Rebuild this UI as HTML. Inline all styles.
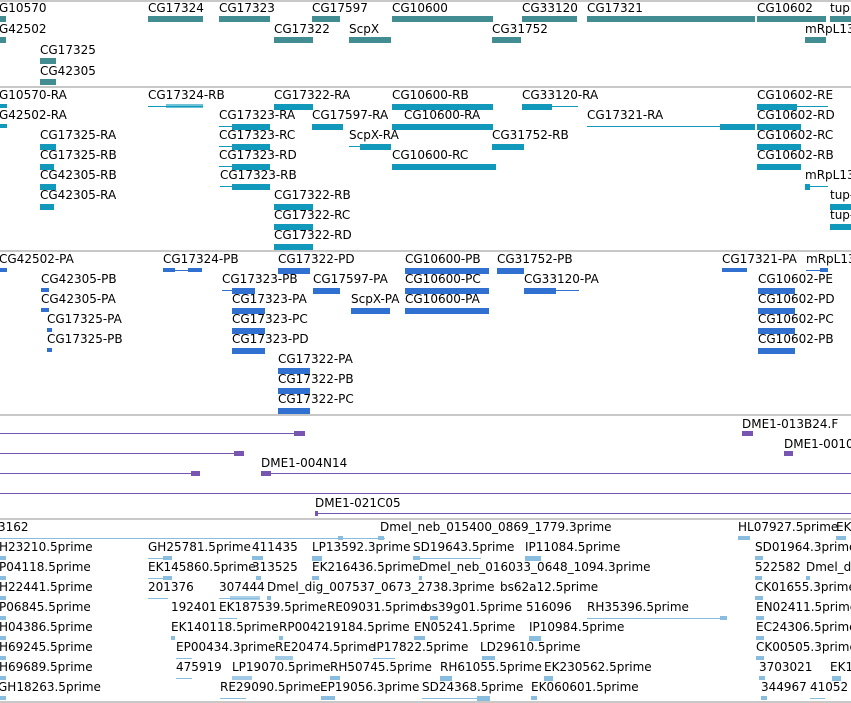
<!DOCTYPE html>
<html><head><meta charset="utf-8"><style>
body{margin:0;width:851px;height:703px;overflow:hidden;background:#fff;position:relative;font-family:"DejaVu Sans","Liberation Sans",sans-serif}
.t{position:absolute;font-size:12px;line-height:14px;white-space:nowrap;color:#000}
.b{position:absolute;height:6px}
.l{position:absolute;height:1px}
.h{position:absolute;left:0;width:851px;height:2px;background:#c8c8c8}
.a{background:#418d92}.c{background:#1199bb}.p{background:#3070d0}.v{background:#7755b0}.s{background:#88bde0}
</style></head><body>
<div class="h" style="top:0"></div>
<div class="h" style="top:86px"></div>
<div class="h" style="top:250px"></div>
<div class="h" style="top:414px"></div>
<div class="h" style="top:518px"></div>
<div class="h" style="top:701px"></div>

<!-- track 1 -->
<div class="t" style="left:-1px;top:1px">G10570</div><div class="b a" style="left:0;top:16px;width:6px"></div>
<div class="t" style="left:148px;top:1px">CG17324</div><div class="b a" style="left:148px;top:16px;width:55px"></div>
<div class="t" style="left:219px;top:1px">CG17323</div><div class="b a" style="left:219px;top:16px;width:51px"></div>
<div class="t" style="left:312px;top:1px">CG17597</div><div class="b a" style="left:312px;top:16px;width:28px"></div>
<div class="t" style="left:392px;top:1px">CG10600</div><div class="b a" style="left:392px;top:16px;width:101px"></div>
<div class="t" style="left:522px;top:1px">CG33120</div><div class="b a" style="left:522px;top:16px;width:55px"></div>
<div class="t" style="left:587px;top:1px">CG17321</div><div class="b a" style="left:587px;top:16px;width:168px"></div>
<div class="t" style="left:757px;top:1px">CG10602</div><div class="b a" style="left:757px;top:16px;width:69px"></div>
<div class="t" style="left:830px;top:1px">tup</div><div class="b a" style="left:830px;top:16px;width:21px"></div>
<div class="t" style="left:-1px;top:22px">G42502</div><div class="b a" style="left:0;top:37px;width:6px"></div>
<div class="t" style="left:274px;top:22px">CG17322</div><div class="b a" style="left:274px;top:37px;width:39px"></div>
<div class="t" style="left:349px;top:22px">ScpX</div><div class="b a" style="left:349px;top:37px;width:42px"></div>
<div class="t" style="left:492px;top:22px">CG31752</div><div class="b a" style="left:492px;top:37px;width:29px"></div>
<div class="t" style="left:805px;top:22px">mRpL13</div><div class="b a" style="left:805px;top:37px;width:21px"></div>
<div class="t" style="left:40px;top:43px">CG17325</div><div class="b a" style="left:40px;top:58px;width:16px"></div>
<div class="t" style="left:40px;top:64px">CG42305</div><div class="b a" style="left:40px;top:79px;width:16px"></div>

<!-- track 2 -->
<div class="t" style="left:-1px;top:88px">G10570-RA</div><div class="b c" style="left:0;top:104px;width:7px;height:4px"></div>
<div class="t" style="left:148px;top:88px">CG17324-RB</div><div class="l c" style="left:148px;top:106px;width:55px"></div><div class="b c" style="left:166px;top:104px;width:37px;height:4px;opacity:.6"></div>
<div class="t" style="left:274px;top:88px">CG17322-RA</div><div class="b c" style="left:274px;top:104px;width:39px"></div>
<div class="t" style="left:392px;top:88px">CG10600-RB</div><div class="b c" style="left:392px;top:104px;width:101px"></div>
<div class="t" style="left:522px;top:88px">CG33120-RA</div><div class="l c" style="left:522px;top:106px;width:56px"></div><div class="b c" style="left:522px;top:104px;width:30px"></div>
<div class="t" style="left:757px;top:88px">CG10602-RE</div><div class="l c" style="left:757px;top:106px;width:71px"></div><div class="b c" style="left:757px;top:104px;width:40px"></div>
<div class="t" style="left:-1px;top:108px">G42502-RA</div><div class="b c" style="left:0;top:124px;width:7px;height:4px"></div>
<div class="t" style="left:219px;top:108px">CG17323-RA</div><div class="l c" style="left:219px;top:126px;width:51px"></div><div class="b c" style="left:232px;top:124px;width:38px"></div>
<div class="t" style="left:312px;top:108px">CG17597-RA</div><div class="b c" style="left:312px;top:124px;width:31px"></div>
<div class="t" style="left:404px;top:108px">CG10600-RA</div><div class="b c" style="left:392px;top:124px;width:101px"></div>
<div class="t" style="left:587px;top:108px">CG17321-RA</div><div class="l c" style="left:587px;top:126px;width:168px"></div><div class="b c" style="left:720px;top:124px;width:35px"></div>
<div class="t" style="left:757px;top:108px">CG10602-RD</div><div class="b c" style="left:757px;top:124px;width:44px"></div>
<div class="t" style="left:40px;top:128px">CG17325-RA</div><div class="b c" style="left:40px;top:144px;width:16px"></div>
<div class="t" style="left:219px;top:128px">CG17323-RC</div><div class="l c" style="left:219px;top:146px;width:51px"></div><div class="b c" style="left:232px;top:144px;width:38px"></div>
<div class="t" style="left:349px;top:128px">ScpX-RA</div><div class="l c" style="left:349px;top:146px;width:42px"></div><div class="b c" style="left:360px;top:144px;width:31px"></div>
<div class="t" style="left:492px;top:128px">CG31752-RB</div><div class="b c" style="left:492px;top:144px;width:32px"></div>
<div class="t" style="left:757px;top:128px">CG10602-RC</div><div class="b c" style="left:757px;top:144px;width:44px"></div>
<div class="t" style="left:40px;top:148px">CG17325-RB</div><div class="b c" style="left:40px;top:164px;width:14px"></div>
<div class="t" style="left:219px;top:148px">CG17323-RD</div><div class="l c" style="left:219px;top:166px;width:51px"></div><div class="b c" style="left:232px;top:164px;width:38px"></div>
<div class="t" style="left:392px;top:148px">CG10600-RC</div><div class="b c" style="left:392px;top:164px;width:104px"></div>
<div class="t" style="left:757px;top:148px">CG10602-RB</div><div class="b c" style="left:757px;top:164px;width:44px"></div>
<div class="t" style="left:40px;top:168px">CG42305-RB</div><div class="b c" style="left:40px;top:184px;width:16px"></div>
<div class="t" style="left:220px;top:168px">CG17323-RB</div><div class="l c" style="left:220px;top:186px;width:50px"></div><div class="b c" style="left:232px;top:184px;width:38px"></div>
<div class="t" style="left:805px;top:168px">mRpL13</div><div class="l c" style="left:805px;top:186px;width:23px"></div><div class="b c" style="left:805px;top:184px;width:5px"></div>
<div class="t" style="left:40px;top:188px">CG42305-RA</div><div class="b c" style="left:40px;top:204px;width:14px"></div>
<div class="t" style="left:274px;top:188px">CG17322-RB</div><div class="b c" style="left:274px;top:204px;width:39px"></div>
<div class="t" style="left:830px;top:188px">tup-</div><div class="b c" style="left:830px;top:204px;width:21px"></div>
<div class="t" style="left:274px;top:208px">CG17322-RC</div><div class="b c" style="left:274px;top:224px;width:39px"></div>
<div class="t" style="left:830px;top:208px">tup-</div><div class="b c" style="left:830px;top:224px;width:21px"></div>
<div class="t" style="left:274px;top:228px">CG17322-RD</div><div class="b c" style="left:274px;top:244px;width:39px"></div>

<!-- track 3 -->
<div class="t" style="left:-1px;top:252px">CG42502-PA</div><div class="b p" style="left:0;top:268px;width:7px;height:4px"></div>
<div class="t" style="left:163px;top:252px">CG17324-PB</div><div class="l p" style="left:163px;top:270px;width:39px"></div><div class="b p" style="left:163px;top:268px;width:12px;height:4px"></div><div class="b p" style="left:188px;top:268px;width:14px;height:4px"></div>
<div class="t" style="left:278px;top:252px">CG17322-PD</div><div class="b p" style="left:278px;top:268px;width:32px"></div>
<div class="t" style="left:405px;top:252px">CG10600-PB</div><div class="b p" style="left:405px;top:268px;width:84px"></div>
<div class="t" style="left:497px;top:252px">CG31752-PB</div><div class="b p" style="left:497px;top:268px;width:27px"></div>
<div class="t" style="left:722px;top:252px">CG17321-PA</div><div class="b p" style="left:722px;top:268px;width:25px;height:4px"></div>
<div class="t" style="left:806px;top:252px">mRpL13</div><div class="l p" style="left:806px;top:270px;width:22px"></div><div class="b p" style="left:820px;top:268px;width:8px;height:4px"></div>
<div class="t" style="left:41px;top:272px">CG42305-PB</div><div class="b p" style="left:41px;top:288px;width:8px;height:4px"></div>
<div class="t" style="left:222px;top:272px">CG17323-PB</div><div class="l p" style="left:222px;top:290px;width:33px"></div><div class="b p" style="left:232px;top:288px;width:23px"></div>
<div class="t" style="left:313px;top:272px">CG17597-PA</div><div class="b p" style="left:313px;top:288px;width:27px"></div>
<div class="t" style="left:405px;top:272px">CG10600-PC</div><div class="b p" style="left:405px;top:288px;width:84px"></div>
<div class="t" style="left:524px;top:272px">CG33120-PA</div><div class="l p" style="left:524px;top:290px;width:55px"></div><div class="b p" style="left:524px;top:288px;width:32px"></div>
<div class="t" style="left:758px;top:272px">CG10602-PE</div><div class="b p" style="left:758px;top:288px;width:37px"></div>
<div class="t" style="left:41px;top:292px">CG42305-PA</div><div class="b p" style="left:41px;top:308px;width:8px;height:4px"></div>
<div class="t" style="left:232px;top:292px">CG17323-PA</div><div class="b p" style="left:232px;top:308px;width:33px"></div>
<div class="t" style="left:351px;top:292px">ScpX-PA</div><div class="b p" style="left:351px;top:308px;width:39px"></div>
<div class="t" style="left:405px;top:292px">CG10600-PA</div><div class="b p" style="left:405px;top:308px;width:84px"></div>
<div class="t" style="left:758px;top:292px">CG10602-PD</div><div class="b p" style="left:758px;top:308px;width:37px"></div>
<div class="t" style="left:47px;top:312px">CG17325-PA</div><div class="b p" style="left:47px;top:328px;width:5px;height:4px"></div>
<div class="t" style="left:232px;top:312px">CG17323-PC</div><div class="b p" style="left:232px;top:328px;width:33px"></div>
<div class="t" style="left:758px;top:312px">CG10602-PC</div><div class="b p" style="left:758px;top:328px;width:37px"></div>
<div class="t" style="left:47px;top:332px">CG17325-PB</div><div class="b p" style="left:47px;top:348px;width:5px;height:4px"></div>
<div class="t" style="left:232px;top:332px">CG17323-PD</div><div class="b p" style="left:232px;top:348px;width:33px"></div>
<div class="t" style="left:758px;top:332px">CG10602-PB</div><div class="b p" style="left:758px;top:348px;width:37px"></div>
<div class="t" style="left:278px;top:352px">CG17322-PA</div><div class="b p" style="left:278px;top:368px;width:32px"></div>
<div class="t" style="left:278px;top:372px">CG17322-PB</div><div class="b p" style="left:278px;top:388px;width:32px"></div>
<div class="t" style="left:278px;top:392px">CG17322-PC</div><div class="b p" style="left:278px;top:408px;width:32px"></div>

<!-- track 4 -->
<div class="l v" style="left:0;top:433px;width:300px"></div><div class="b v" style="left:294px;top:431px;width:11px;height:5px"></div>
<div class="l v" style="left:0;top:453px;width:244px"></div><div class="b v" style="left:234px;top:451px;width:10px;height:5px"></div>
<div class="l v" style="left:0;top:473px;width:200px"></div><div class="b v" style="left:191px;top:471px;width:9px;height:5px"></div>
<div class="t" style="left:261px;top:456px">DME1-004N14</div><div class="l v" style="left:261px;top:473px;width:590px"></div><div class="b v" style="left:261px;top:471px;width:10px;height:5px"></div>
<div class="l v" style="left:0;top:493px;width:851px"></div>
<div class="t" style="left:315px;top:496px">DME1-021C05</div><div class="l v" style="left:315px;top:513px;width:536px"></div><div class="b v" style="left:315px;top:511px;width:3px;height:5px"></div>
<div class="t" style="left:742px;top:417px">DME1-013B24.F</div><div class="b v" style="left:742px;top:431px;width:11px;height:5px"></div>
<div class="t" style="left:784px;top:437px">DME1-0010</div><div class="b v" style="left:784px;top:451px;width:9px;height:5px"></div>

<!-- track 5 -->
<div class="t" style="left:-2px;top:520px">3162</div><div class="l s" style="left:0;top:538px;width:385px"></div><div class="b s" style="left:338px;top:536px;width:5px;height:4px"></div><div class="b s" style="left:378px;top:536px;width:6px;height:4px"></div>
<div class="t" style="left:380px;top:520px">Dmel_neb_015400_0869_1779.3prime</div>
<div class="t" style="left:738px;top:520px">HL07927.5prime</div><div class="b s" style="left:738px;top:536px;width:12px;height:4px"></div>
<div class="t" style="left:836px;top:520px">EK</div><div class="b s" style="left:836px;top:536px;width:10px;height:4px"></div>

<div class="t" style="left:-1px;top:540px">H23210.5prime</div><div class="b s" style="left:0;top:556px;width:6px;height:4px"></div>
<div class="t" style="left:148px;top:540px">GH25781.5prime</div><div class="l s" style="left:148px;top:558px;width:24px"></div><div class="b s" style="left:163px;top:556px;width:9px;height:4px"></div>
<div class="t" style="left:252px;top:540px">411435</div><div class="b s" style="left:252px;top:556px;width:11px;height:4px"></div>
<div class="t" style="left:312px;top:540px">LP13592.3prime</div><div class="b s" style="left:312px;top:556px;width:10px;height:5px"></div>
<div class="t" style="left:413px;top:540px">SD19643.5prime</div><div class="l s" style="left:413px;top:558px;width:68px"></div><div class="b s" style="left:413px;top:556px;width:7px;height:4px"></div>
<div class="t" style="left:525px;top:540px">IP11084.5prime</div><div class="b s" style="left:525px;top:556px;width:16px;height:5px"></div>
<div class="t" style="left:755px;top:540px">SD01964.3prime</div><div class="b s" style="left:755px;top:556px;width:8px;height:4px"></div>

<div class="t" style="left:-1px;top:560px">P04118.5prime</div><div class="b s" style="left:0;top:576px;width:6px;height:4px"></div>
<div class="t" style="left:148px;top:560px">EK145860.5prime</div><div class="l s" style="left:148px;top:578px;width:24px"></div><div class="b s" style="left:163px;top:576px;width:9px;height:4px"></div>
<div class="t" style="left:252px;top:560px">313525</div><div class="b s" style="left:256px;top:576px;width:5px;height:4px"></div>
<div class="t" style="left:312px;top:560px">EK216436.5prime</div><div class="b s" style="left:312px;top:576px;width:7px;height:4px"></div>
<div class="t" style="left:419px;top:560px">Dmel_neb_016033_0648_1094.3prime</div><div class="b s" style="left:419px;top:576px;width:3px;height:4px"></div>
<div class="t" style="left:755px;top:560px">522582</div><div class="b s" style="left:755px;top:576px;width:7px;height:4px"></div>
<div class="t" style="left:806px;top:560px">Dmel_d</div><div class="b s" style="left:806px;top:576px;width:4px;height:4px"></div>

<div class="t" style="left:-1px;top:580px">H22441.5prime</div><div class="b s" style="left:0;top:596px;width:6px;height:4px"></div>
<div class="t" style="left:148px;top:580px">201376</div><div class="l s" style="left:148px;top:598px;width:20px"></div>
<div class="t" style="left:219px;top:580px">307444</div><div class="l s" style="left:219px;top:598px;width:40px"></div><div class="b s" style="left:230px;top:596px;width:30px;height:4px;opacity:.7"></div>
<div class="t" style="left:267px;top:580px">Dmel_dig_007537_0673_2738.3prime</div><div class="b s" style="left:267px;top:596px;width:4px;height:4px"></div>
<div class="t" style="left:500px;top:580px">bs62a12.5prime</div>
<div class="t" style="left:755px;top:580px">CK01655.3prime</div><div class="b s" style="left:755px;top:596px;width:8px;height:4px"></div>

<div class="t" style="left:-1px;top:600px">P06845.5prime</div><div class="b s" style="left:0;top:616px;width:6px;height:4px"></div>
<div class="t" style="left:171px;top:600px">192401</div>
<div class="t" style="left:219px;top:600px">EK187539.5prime</div><div class="l s" style="left:219px;top:618px;width:18px"></div>
<div class="t" style="left:327px;top:600px">RE09031.5prime</div>
<div class="t" style="left:424px;top:600px">bs39g01.5prime</div><div class="b s" style="left:430px;top:616px;width:8px;height:4px"></div>
<div class="t" style="left:526px;top:600px">516096</div>
<div class="t" style="left:587px;top:600px">RH35396.5prime</div><div class="l s" style="left:587px;top:618px;width:140px"></div><div class="b s" style="left:720px;top:616px;width:7px;height:4px"></div>
<div class="t" style="left:756px;top:600px">EN02411.5prime</div><div class="b s" style="left:756px;top:616px;width:8px;height:4px"></div>

<div class="t" style="left:-1px;top:620px">H04386.5prime</div><div class="b s" style="left:0;top:636px;width:6px;height:4px"></div>
<div class="t" style="left:171px;top:620px">EK140118.5prime</div><div class="b s" style="left:171px;top:636px;width:4px;height:4px"></div>
<div class="t" style="left:279px;top:620px">RP004219184.5prime</div><div class="b s" style="left:279px;top:636px;width:4px;height:4px"></div>
<div class="t" style="left:414px;top:620px">EN05241.5prime</div><div class="b s" style="left:414px;top:636px;width:11px;height:4px"></div>
<div class="t" style="left:529px;top:620px">IP10984.5prime</div><div class="b s" style="left:529px;top:636px;width:12px;height:5px"></div>
<div class="t" style="left:756px;top:620px">EC24306.5prime</div><div class="b s" style="left:756px;top:636px;width:8px;height:4px"></div>

<div class="t" style="left:-1px;top:640px">H69245.5prime</div><div class="b s" style="left:0;top:656px;width:6px;height:4px"></div>
<div class="t" style="left:176px;top:640px">EP00434.3prime</div><div class="l s" style="left:176px;top:658px;width:16px"></div>
<div class="t" style="left:275px;top:640px">RE20474.5prime</div><div class="b s" style="left:275px;top:656px;width:18px;height:4px;opacity:.8"></div>
<div class="t" style="left:373px;top:640px">IP17822.5prime</div><div class="l s" style="left:373px;top:658px;width:22px"></div>
<div class="t" style="left:480px;top:640px">LD29610.5prime</div><div class="b s" style="left:482px;top:656px;width:13px;height:4px"></div>
<div class="t" style="left:756px;top:640px">CK00505.3prime</div><div class="b s" style="left:756px;top:656px;width:8px;height:4px"></div>

<div class="t" style="left:-1px;top:660px">H69689.5prime</div><div class="b s" style="left:0;top:676px;width:6px;height:4px"></div>
<div class="t" style="left:176px;top:660px">475919</div><div class="l s" style="left:176px;top:678px;width:16px"></div>
<div class="t" style="left:232px;top:660px">LP19070.5prime</div><div class="b s" style="left:232px;top:676px;width:20px;height:4px;opacity:.8"></div>
<div class="t" style="left:330px;top:660px">RH50745.5prime</div><div class="b s" style="left:330px;top:676px;width:10px;height:4px"></div>
<div class="t" style="left:440px;top:660px">RH61055.5prime</div><div class="b s" style="left:440px;top:676px;width:12px;height:5px"></div>
<div class="t" style="left:544px;top:660px">EK230562.5prime</div><div class="b s" style="left:544px;top:676px;width:9px;height:5px"></div>
<div class="t" style="left:759px;top:660px">3703021</div><div class="b s" style="left:759px;top:676px;width:6px;height:4px"></div>
<div class="t" style="left:830px;top:660px">EK1</div><div class="b s" style="left:832px;top:676px;width:9px;height:5px"></div>

<div class="t" style="left:-2px;top:680px">GH18263.5prime</div><div class="b s" style="left:0;top:696px;width:6px;height:4px"></div>
<div class="t" style="left:220px;top:680px">RE29090.5prime</div><div class="l s" style="left:220px;top:698px;width:26px"></div>
<div class="t" style="left:320px;top:680px">EP19056.3prime</div><div class="b s" style="left:321px;top:696px;width:14px;height:4px"></div>
<div class="t" style="left:422px;top:680px">SD24368.5prime</div><div class="l s" style="left:422px;top:698px;width:68px"></div><div class="b s" style="left:477px;top:696px;width:13px;height:5px"></div>
<div class="t" style="left:531px;top:680px">EK060601.5prime</div><div class="b s" style="left:531px;top:696px;width:6px;height:4px"></div>
<div class="t" style="left:761px;top:680px">344967</div><div class="b s" style="left:761px;top:696px;width:6px;height:4px"></div>
<div class="t" style="left:810px;top:680px">41052</div><div class="l s" style="left:810px;top:698px;width:15px"></div>
</body></html>
